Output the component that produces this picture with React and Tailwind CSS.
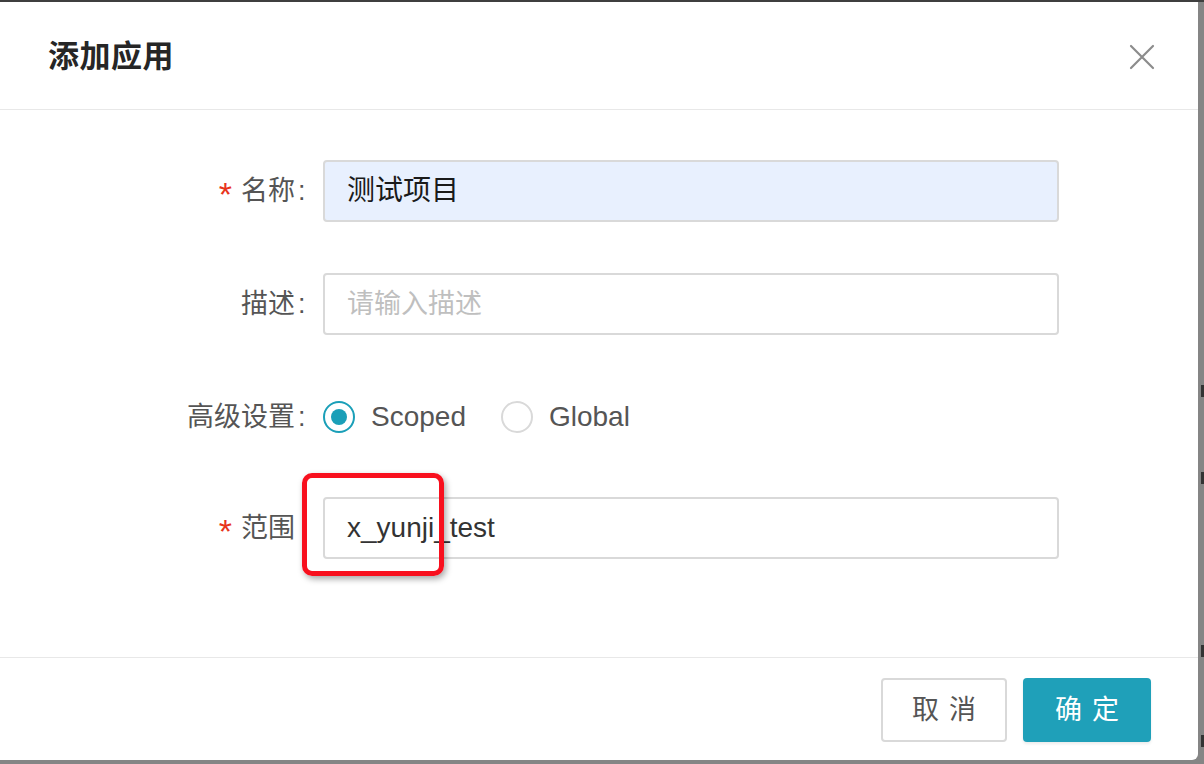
import React from "react";

const font = { fontFamily: '"Liberation Sans", "Noto Sans CJK SC", sans-serif' };

function Label({ required, text, colon = true }) {
  return (
    <div className="w-[311px] flex justify-end items-center text-[27px] text-[#555555]">
      {required && <span className="text-[#e8341c] mr-[9px] text-[34px] leading-none mt-[6px]">*</span>}
      <span>{text}</span>
      <span className="w-[16px] text-left pl-[3px]">{colon ? ":" : ""}</span>
    </div>
  );
}

export default function App() {
  return (
    <div className="w-[1204px] h-[764px] bg-[#858585] relative overflow-hidden" style={font}>
      <div className="h-[2px] bg-[#3f3f3f] w-full" />
      <div className="w-[1198px] h-[758px] bg-white rounded-br-[6px] flex flex-col">
        <div className="h-[108px] border-b border-[#e8e8e8] flex items-center justify-between pl-[48px] pr-[43px]">
          <div className="text-[31px] font-semibold text-[#262626] tracking-[0.5px] mt-[3px]">添加应用</div>
          <svg width="26" height="26" viewBox="0 0 26 26" className="mt-[2px]">
            <path d="M2 2 L24 24 M24 2 L2 24" stroke="#8c8c8c" strokeWidth="2.2" strokeLinecap="round" />
          </svg>
        </div>
        <div className="flex-1 border-b border-[#e8e8e8] pt-[50px] flex flex-col">
          <div className="flex items-center">
            <Label required text="名称" />
            <div className="ml-[12px] w-[736px] h-[62px] rounded-[4px] border-2 border-[#d9d9d9] bg-[#e8f0fe] flex items-center px-[22px] text-[28px] text-[#1a1a1a]">
              测试项目
            </div>
          </div>
          <div className="flex items-center mt-[51px]">
            <Label text="描述" />
            <div className="ml-[12px] w-[736px] h-[62px] rounded-[4px] border-2 border-[#d9d9d9] bg-white flex items-center px-[22px] text-[27px] text-[#bfbfbf]">
              请输入描述
            </div>
          </div>
          <div className="flex items-center h-[62px] mt-[51px]">
            <Label text="高级设置" />
            <div className="ml-[12px] flex items-center text-[28px] text-[#555555]">
              <span className="w-[32px] h-[32px] rounded-full border-2 border-[#1a9fb8] flex items-center justify-center">
                <span className="w-[16px] h-[16px] rounded-full bg-[#1a9fb8]" />
              </span>
              <span className="ml-[16px]">Scoped</span>
              <span className="ml-[35px] w-[32px] h-[32px] rounded-full border-2 border-[#d9d9d9]" />
              <span className="ml-[16px]">Global</span>
            </div>
          </div>
          <div className="flex items-center relative mt-[49px]">
            <Label required text="范围" colon={false} />
            <div className="ml-[12px] w-[736px] h-[62px] rounded-[4px] border-2 border-[#d9d9d9] bg-white flex items-center px-[22px] text-[28px] text-[#333333]">
              x_yunji_test
            </div>
            <div className="absolute left-[302px] top-[-24px] w-[142px] h-[103px] border-[5px] border-[#f8101e] rounded-[10px] shadow-[2px_3px_6px_rgba(0,0,0,0.35)]" />
          </div>
        </div>
        <div className="h-[102px] flex items-center justify-end pr-[47px] gap-[16px] pt-[2px]">
          <div className="w-[126px] h-[64px] rounded-[4px] border-2 border-[#d9d9d9] flex items-center justify-center text-[27px] text-[#555555] tracking-[10px] pl-[10px]">
            取消
          </div>
          <div className="w-[128px] h-[64px] rounded-[4px] bg-[#1fa0b9] flex items-center justify-center text-[27px] text-white tracking-[10px] pl-[10px] shadow-[0_2px_3px_rgba(0,0,0,0.08)]">
            确定
          </div>
        </div>
      </div>
      <div className="absolute right-0 top-[385px] w-[3px] h-[12px] bg-[#333]" />
      <div className="absolute right-0 top-[472px] w-[3px] h-[12px] bg-[#333]" />
      <div className="absolute right-0 top-[645px] w-[3px] h-[12px] bg-[#333]" />
      <div className="absolute right-0 top-[735px] w-[3px] h-[12px] bg-[#333]" />
    </div>
  );
}
